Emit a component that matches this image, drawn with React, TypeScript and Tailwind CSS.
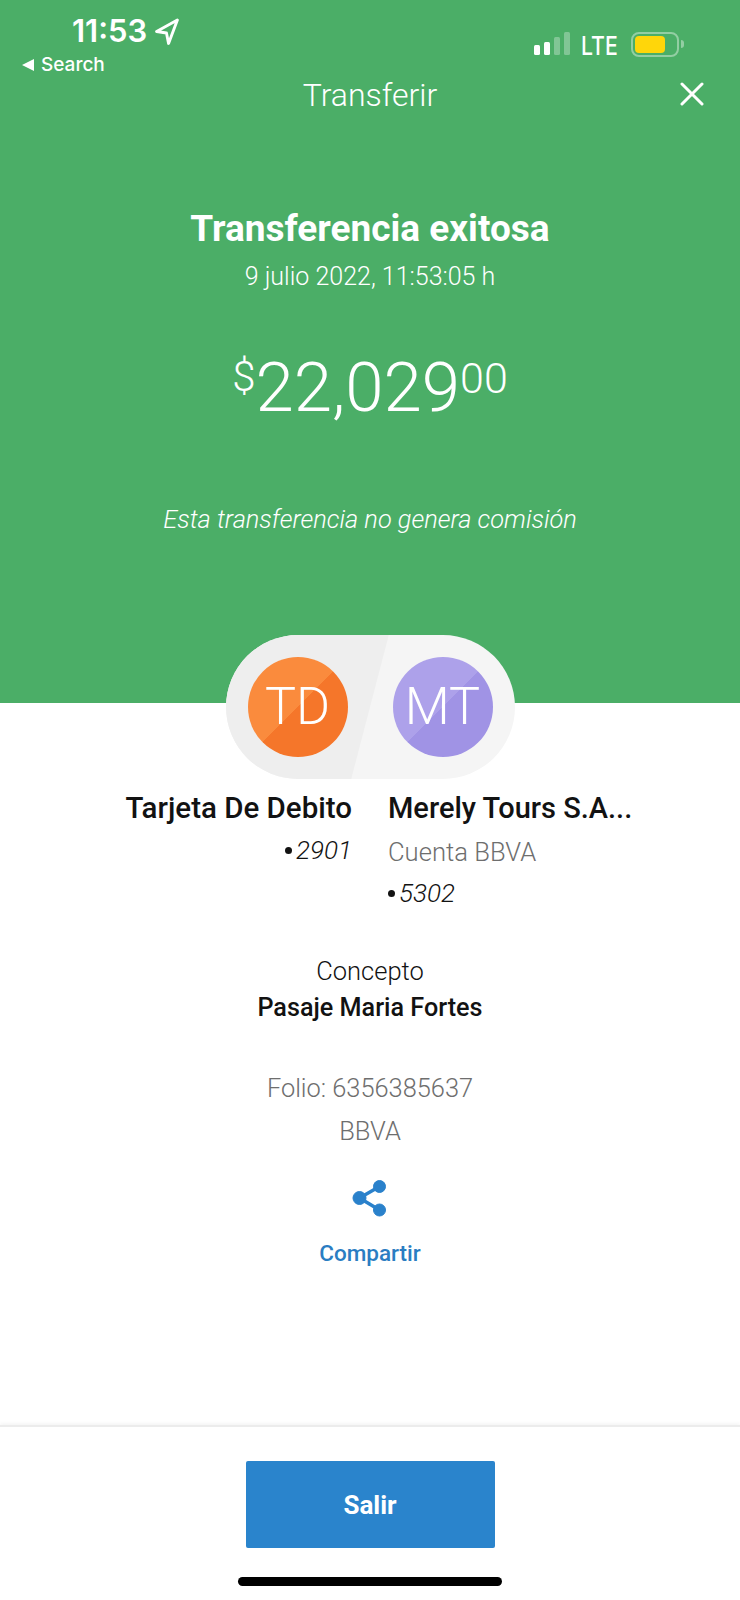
import React from "react";

export default function App() {
  return (
    <div className="w-[740px] h-[1600px] bg-white flex flex-col overflow-hidden font-['Roboto',sans-serif]">
      <div className="h-[703px] bg-[#4bae67] text-white flex flex-col shrink-0">
        <div className="h-[75px] flex justify-between shrink-0">
          <div className="pl-[22px] pt-[13px] flex flex-col">
            <div className="flex items-center pl-[50px] gap-[7px] h-[36px]">
              <span className="text-[31px] leading-[36px] font-semibold font-['Inter',sans-serif]">11:53</span>
              <svg width="26" height="27" viewBox="0 0 24 26" fill="none" stroke="white" strokeWidth="2.8" strokeLinejoin="round"><path d="M22 2 2 13l9.5 1.5 2 10z" /></svg>
            </div>
            <div className="flex items-center gap-[7px] h-[24px] mt-[4px]">
              <svg width="12" height="12" viewBox="0 0 12 12"><path d="M0 6 12 0v12z" fill="white" /></svg>
              <span className="text-[19px] leading-[24px] font-['Inter',sans-serif] font-medium">Search</span>
            </div>
          </div>
          <div className="flex items-start pt-[32px] pr-[56px]">
            <div className="flex items-end gap-[4px] h-[23px]">
              <div className="w-[6px] h-[10px] bg-white rounded-[1.5px]" />
              <div className="w-[6px] h-[13px] bg-white rounded-[1.5px]" />
              <div className="w-[6px] h-[18px] bg-white/30 rounded-[1.5px]" />
              <div className="w-[6px] h-[23px] bg-white/30 rounded-[1.5px]" />
            </div>
            <span className="ml-[11px] w-[50px] text-[25px] leading-[28px] font-['Inter',sans-serif] font-medium scale-x-[0.85] origin-left">LTE</span>
            <div className="w-[48px] h-[25px] rounded-[8px] border-2 border-white/40 p-[2px] flex items-stretch">
              <div className="w-[30px] bg-[#ffd60a] rounded-[4px]" />
            </div>
            <div className="w-[3px] h-[8px] bg-white/40 mt-[8px] ml-[2px] rounded-r" />
          </div>
        </div>
        <div className="relative h-[40px] flex items-center justify-center shrink-0">
          <span className="text-[32px] leading-[40px] font-light">Transferir</span>
          <svg className="absolute left-[680px] top-[7px]" width="24" height="24" viewBox="0 0 24 24" stroke="white" strokeWidth="3" strokeLinecap="round"><path d="M2 2l20 20M22 2 2 22" /></svg>
        </div>
        <div className="mt-[92px] text-center text-[37px] leading-[44px] font-bold">Transferencia exitosa</div>
        <div className="mt-[10px] text-center text-[25px] leading-[32px] font-light">9 julio 2022, 11:53:05 h</div>
        <div className="mt-[55px] flex justify-center items-start h-[80px]">
          <span className="text-[42px] leading-[44px] font-light mt-[7px]">$</span>
          <span className="text-[69px] leading-[80px] font-light">22,029</span>
          <span className="text-[43px] leading-[44px] font-light mt-[8px]">00</span>
        </div>
        <div className="mt-[75px] text-center text-[25.4px] leading-[32px] italic font-light">Esta transferencia no genera comisión</div>
      </div>

      <div className="flex justify-center -mt-[68px] shrink-0 relative">
        <div className="w-[289px] h-[144px] rounded-[72px] overflow-hidden relative bg-[#f5f5f5] flex items-center justify-between px-[22px]">
          <div className="absolute inset-0 bg-[#eeeeee] [clip-path:polygon(0_0,56.5%_0,43.5%_100%,0_100%)]" />
          <Avatar text="TD" c1="#fa8b3d" c2="#f5762a" />
          <Avatar text="MT" c1="#ada1ea" c2="#a093e5" />
        </div>
      </div>

      <div className="flex justify-center gap-[36px] mt-[11px] shrink-0">
        <div className="w-[232px] flex flex-col items-end">
          <div className="text-[29.5px] leading-[36px] font-medium text-[#121212] whitespace-nowrap">Tarjeta De Debito</div>
          <div className="mt-[8px] text-[26px] leading-[32px] italic font-light text-[#121212] flex items-center gap-[4px]"><span className="w-[7px] h-[7px] rounded-full bg-[#121212]" />2901</div>
        </div>
        <div className="w-[232px] flex flex-col items-start">
          <div className="text-[29px] leading-[36px] font-medium text-[#121212] whitespace-nowrap">Merely Tours S.A...</div>
          <div className="mt-[10px] text-[25.6px] leading-[32px] font-light text-[#6e6e6e]">Cuenta BBVA</div>
          <div className="mt-[9px] text-[26px] leading-[32px] italic font-light text-[#121212] flex items-center gap-[4px]"><span className="w-[7px] h-[7px] rounded-full bg-[#121212]" />5302</div>
        </div>
      </div>

      <div className="mt-[46px] text-center text-[25.5px] leading-[32px] font-light text-[#121212]">Concepto</div>
      <div className="mt-[5px] text-center text-[25.2px] leading-[32px] font-medium text-[#121212]">Pasaje Maria Fortes</div>
      <div className="mt-[48px] text-center text-[25.4px] leading-[32px] font-light text-[#6e6e6e]">Folio: 6356385637</div>
      <div className="mt-[11px] text-center text-[25.5px] leading-[32px] font-light text-[#6e6e6e]">BBVA</div>
      <div className="mt-[32px] flex justify-center">
        <svg width="36" height="38" viewBox="0 0 36 38" fill="#2a81cb" stroke="#2a81cb">
          <circle cx="27.5" cy="7.5" r="6" />
          <circle cx="7.5" cy="19" r="6.5" />
          <circle cx="27.5" cy="31" r="6" />
          <path d="M27.5 7.5 7.5 19l20 12" fill="none" strokeWidth="3.5" />
        </svg>
      </div>
      <div className="mt-[22px] text-center text-[22.5px] leading-[28px] font-medium text-[#2a7dc2]">Compartir</div>

      <div className="mt-auto h-[175px] border-t-[2px] border-[#ececec] shadow-[0_-2px_3px_rgba(0,0,0,0.04)] flex flex-col items-center shrink-0">
        <button className="mt-[34px] w-[249px] h-[87px] bg-[#2a84cc] rounded-[2px] text-white text-[26px] leading-[32px] font-bold">Salir</button>
        <div className="mt-[29px] w-[264px] h-[9px] rounded-full bg-black" />
      </div>
    </div>
  );
}

function Avatar({ text, c1, c2 }: { text: string; c1: string; c2: string }) {
  return (
    <div
      className="relative w-[100px] h-[100px] rounded-full overflow-hidden flex items-center justify-center"
      style={{ background: `linear-gradient(135deg, ${c1} 50%, ${c2} 50%)` }}
    >
      <span className="text-white text-[52px] leading-none font-light">{text}</span>
    </div>
  );
}
